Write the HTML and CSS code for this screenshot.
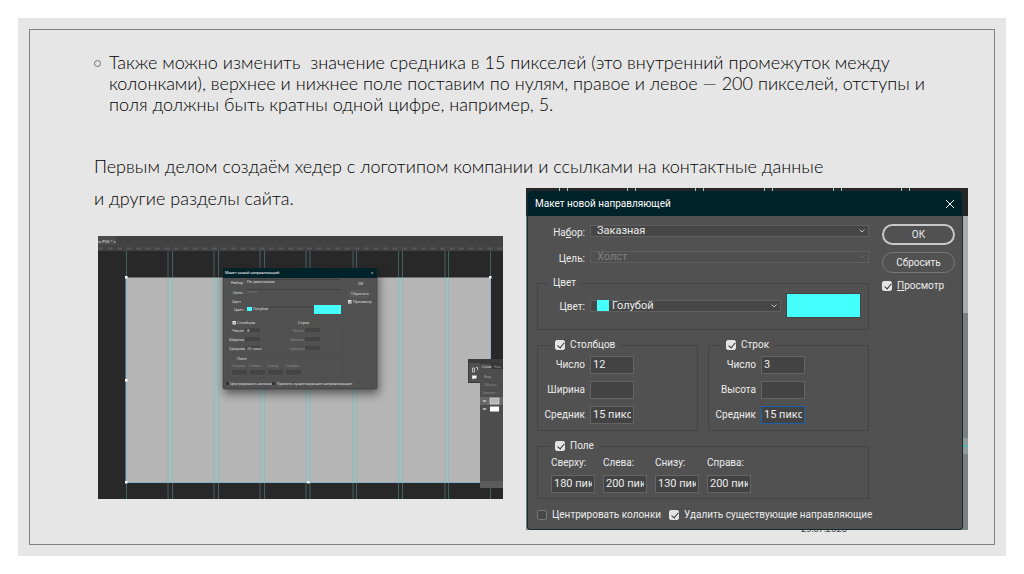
FILE: index.html
```html
<!DOCTYPE html>
<html lang="ru">
<head>
<meta charset="utf-8">
<title>Макет новой направляющей</title>
<link rel="stylesheet" href="styles.css">
</head>
<body>
<main class="slide">
  <div class="frame">
    <ul class="notes">
      <li>Также можно изменить&nbsp; значение средника в 15 пикселей (это внутренний промежуток между<br>колонками), верхнее и нижнее поле поставим по нулям, правое и левое — 200 пикселей, отступы и<br>поля должны быть кратны одной цифре, например, 5.</li>
    </ul>
    <p class="lead">Первым делом создаём хедер с логотипом компании и ссылками на контактные данные</p>
    <div class="columns">
      <div class="left">
        <p class="lead">и другие разделы сайта.</p>
        <svg class="thumb" viewBox="0 0 405 263" role="img" aria-label="Окно редактора с направляющими">
          <defs>
            <filter id="shade" x="-20%" y="-20%" width="140%" height="150%"><feGaussianBlur stdDeviation="5"/></filter>
          </defs>
          <rect width="405" height="263" fill="#282828"/>
          <rect width="405" height="15" fill="#424242"/>
          <rect width="18" height="9" fill="#4c4c4c"/>
          <path d="M0 12.500H405" stroke="#777" stroke-width="2" stroke-dasharray="5 4.500" opacity=".4"/>
          <rect x="28" y="41.500" width="364.500" height="205" fill="#b5b5b5"/>
          <g fill="#9cc4c4" opacity=".5">
            <rect x="70" y="42" width="5" height="204"/><rect x="116" y="42" width="5" height="204"/><rect x="162" y="42" width="5" height="204"/><rect x="208" y="42" width="5" height="204"/><rect x="255" y="42" width="4" height="204"/><rect x="300" y="42" width="5" height="204"/><rect x="347" y="42" width="4" height="204"/>
          </g>
          <path d="M28.500 15V263M70 15V263M74.500 15V263M116 15V263M120.500 15V263M162 15V263M166.500 15V263M208 15V263M212 15V263M255 15V263M258.500 15V263M300.500 15V263M304.500 15V263M347 15V263M350.500 15V263M392.500 15V263" stroke="#6fbab4" stroke-width="1" opacity=".4"/>
          <path d="M28 41.500V246.500H392.500V41.500" fill="none" stroke="#8ab3cf" stroke-width="1"/>
          <g fill="#fff"><rect x="27" y="40" width="2.500" height="2.500"/><rect x="391" y="40" width="2.500" height="2.500"/><rect x="27" y="143" width="2.500" height="2.500"/><rect x="27" y="245" width="2.500" height="2.500"/><rect x="209" y="245" width="2.500" height="2.500"/></g>
          <text x="0" y="7" font-size="4" fill="#ddd">ы.PSD * ×</text>
          <rect x="126" y="38" width="155" height="120" fill="#000" opacity=".5" filter="url(#shade)"/>
          <rect x="125" y="32" width="154" height="121" rx="1.500" fill="#515151" stroke="#333" stroke-width=".5"/>
          <path d="M125 42V33.500Q125 32 126.500 32H277.500Q279 32 279 33.500V42Z" fill="#002229"/>
          <path d="M148 43.500H243M148 53.500H243M162 71H218" stroke="#414141"/>
          <g fill="#434343"><rect x="147" y="92" width="15" height="4"/><rect x="147" y="101" width="15" height="4"/><rect x="147" y="110" width="15" height="4"/><rect x="207" y="92" width="15" height="4"/><rect x="207" y="101" width="15" height="4"/><rect x="207" y="110" width="15" height="4"/><rect x="134" y="134" width="15" height="4.500"/><rect x="152" y="134" width="15" height="4.500"/><rect x="170" y="134" width="15" height="4.500"/><rect x="188" y="134" width="15" height="4.500"/></g>
          <g font-size="4" fill="#ddd">
            <text x="127" y="38" fill="#fff">Макет новой направляющей</text><text x="273" y="38">×</text>
            <text x="133" y="48">Набор:</text><text x="149" y="47">По умолчанию</text>
            <text x="135" y="58">Цель:</text><text x="149" y="57" fill="#777">Холст</text>
            <text x="134" y="67">Цвет</text><text x="136" y="75">Цвет:</text><text x="155" y="74">Голубой</text>
            <text x="139" y="88">Столбцов</text><text x="200" y="88">Строк</text>
            <text x="134" y="96">Число</text><text x="149" y="96">8</text>
            <text x="131" y="105">Ширина</text><text x="131" y="114">Средник</text><text x="149" y="114">20 пикс.</text>
            <text x="139" y="124">Поле</text>
            <text x="132" y="149">Центрировать колонки</text><text x="179" y="149">Удалить существующие направляющие</text>
            <text x="260" y="49">ОК</text><text x="253" y="59">Сбросить</text><text x="255" y="67">Просмотр</text>
          </g>
          <g font-size="4" fill="#888">
            <text x="194" y="96">Число</text><text x="192" y="105">Высота</text><text x="191" y="114">Средник</text>
            <text x="134" y="131">Сверху:</text><text x="151" y="131">Слева:</text><text x="169" y="131">Снизу:</text><text x="187" y="131">Справа:</text>
          </g>
          <path d="M130 87H132M158 87H188V117H130V87M192 87H198M213 87H245V117H192V87M130 122H137M150 122H245V142H130V122" fill="none" stroke="#484848" stroke-width=".5"/>
          <rect x="149" y="71" width="5" height="4" fill="#45ffff"/>
          <rect x="216" y="69" width="27" height="9" fill="#45ffff"/>
          <g fill="#eee"><rect x="134.500" y="85" width="3.500" height="3.500" rx=".5"/><rect x="250" y="64" width="3.500" height="3.500" rx=".5"/></g>
          <path d="M135.200 86.700l.9.900 1.400-1.800M250.700 65.700l.9.900 1.400-1.800" fill="none" stroke="#333" stroke-width=".6"/>
          <g fill="#333"><rect x="128" y="146" width="3" height="3"/><rect x="174" y="146" width="3" height="3"/></g>
          <rect x="251" y="55" width="20" height="6" rx="3" fill="none" stroke="#6a6a6a" stroke-width=".5"/>
          <rect x="370" y="123" width="35" height="24" fill="#3a3a3a"/>
          <rect x="371" y="127" width="11" height="19" fill="#505050"/>
          <rect x="382" y="128" width="23" height="124" fill="#4d4d4d"/>
          <rect x="393" y="128" width="12" height="5" fill="#353535"/>
          <rect x="382" y="245" width="23" height="7" fill="#5b5b5b"/>
          <path d="M374.500 132h2v4h-2zM378 131.500h1.500v2.500" fill="none" stroke="#ddd" stroke-width=".8"/>
          <path d="M374 139.500h4.500v3h-2.500l-1.500 1z" fill="#fff"/>
          <g font-size="4" fill="#ddd"><text x="384" y="132">Слои</text><text x="396" y="132" fill="#999">Кан</text><text x="386" y="142" fill="#999">Вид</text><text x="386" y="150" fill="#888">Обычн.</text><text x="384" y="158" fill="#888">Закреп.:</text></g>
          <rect x="382" y="161" width="23" height="8" fill="#666"/>
          <rect x="392" y="162" width="9" height="6" fill="#b5b5b5" stroke="#ddd" stroke-width=".7"/><rect x="392" y="170.500" width="9" height="5" fill="#fff"/>
          <g fill="#bbb"><ellipse cx="386.500" cy="165" rx="2" ry="1"/><ellipse cx="386.500" cy="173" rx="2" ry="1"/></g>
        </svg>
      </div>
      <div class="shot">
        <svg class="backdrop" viewBox="0 0 442 342" preserveAspectRatio="none" aria-hidden="true">
          <rect width="442" height="342" fill="#7b7f7f"/>
          <rect width="442" height="28" fill="#262626"/>
          <rect x="436" y="28" width="6" height="97" fill="#a9adad"/>
          <rect x="436" y="250" width="6" height="16" fill="#8d9b9b"/><rect x="436" y="257" width="6" height="2" fill="#55b5b0"/>
          <path d="M33.500 0V4M41.500 0V4M101.500 0V4M109.500 0V4M169.500 0V4M177.500 0V4M238.500 0V4M246.500 0V4M307.500 0V4M315.500 0V4M375.500 0V4M383.500 0V4" stroke="#8ccfc5"/>
        </svg>
        <form class="dialog">
          <header class="titlebar">
            <h1>Макет новой направляющей</h1>
            <button type="button" class="close" aria-label="Закрыть"><svg viewBox="0 0 10 10"><path d="M1 1l8 8M9 1l-8 8"/></svg></button>
          </header>
          <div class="body">
            <div class="main">
              <div class="pair"><label for="preset">На<u>б</u>ор:</label><span class="drop"><select id="preset"><option>Заказная</option></select><svg viewBox="0 0 6 4"><path d="M.5 .5L3 3L5.500 .5"/></svg></span></div>
              <div class="pair"><label for="target">Цель:</label><span class="drop off"><select id="target" disabled><option>Холст</option></select><svg viewBox="0 0 6 4"><path d="M.5 .5L3 3L5.500 .5"/></svg></span></div>
              <fieldset class="color">
                <legend>Цвет</legend>
                <div class="pair"><label for="tint">Цвет:</label><span class="drop"><i class="chip"></i><select id="tint"><option>Голубой</option></select><svg viewBox="0 0 6 4"><path d="M.5 .5L3 3L5.500 .5"/></svg></span><button type="button" class="swatch" aria-label="Выбрать цвет"></button></div>
              </fieldset>
              <div class="sets">
                <fieldset>
                  <legend><label class="tick"><input type="checkbox" checked>Столбцов</label></legend>
                  <div class="pair"><label for="cn">Число</label><input id="cn" class="field" type="text" value="12"></div>
                  <div class="pair"><label for="cw">Ширина</label><input id="cw" class="field" type="text"></div>
                  <div class="pair"><label for="cg">Средник</label><input id="cg" class="field" type="text" value="15 пикс."></div>
                </fieldset>
                <fieldset>
                  <legend><label class="tick"><input type="checkbox" checked>Строк</label></legend>
                  <div class="pair"><label for="rn">Число</label><input id="rn" class="field" type="text" value="3"></div>
                  <div class="pair"><label for="rh">Высота</label><input id="rh" class="field" type="text"></div>
                  <div class="pair"><label for="rg">Средник</label><input id="rg" class="field active" type="text" value="15 пикс."></div>
                </fieldset>
              </div>
              <fieldset class="margins">
                <legend><label class="tick"><input type="checkbox" checked>Поле</label></legend>
                <div class="sides">
                  <label>Сверху:<input class="field" type="text" value="180 пикс."></label>
                  <label>Слева:<input class="field" type="text" value="200 пикс."></label>
                  <label>Снизу:<input class="field" type="text" value="130 пикс."></label>
                  <label>Справа:<input class="field" type="text" value="200 пикс."></label>
                </div>
              </fieldset>
              <div class="options">
                <label class="tick"><input type="checkbox">Центрировать колонки</label>
                <label class="tick"><input type="checkbox" checked>Удалить существующие направляющие</label>
              </div>
            </div>
            <div class="side">
              <button type="button" class="pill strong">ОК</button>
              <button type="button" class="pill">Сбросить</button>
              <label class="tick"><input type="checkbox" checked><span><u>П</u>росмотр</span></label>
            </div>
          </div>
        </form>
      </div>
    </div>
    <time class="date" datetime="2023-07-25">25.07.2023</time>
  </div>
</main>
</body>
</html>
```
FILE: styles.css
```css
* { box-sizing: border-box; }
body { margin: 0; padding: 18px; background: #fff; color: #000; font: 300 18px/22px Lato, "Open Sans", sans-serif; }
.slide { padding: 11px; background: #e6e6e6; }
.frame { position: relative; border: 1px solid #7f8281; padding: 22px 26px 14px 64px; }
.notes { margin: 0 0 40px; padding: 0; list-style: none; line-height: 21px; }
.notes li { position: relative; padding-left: 15px; white-space: nowrap; }
.notes li::before { content: ""; position: absolute; left: 0; top: 8px; width: 5px; height: 5px; border: 1px solid #707070; border-radius: 50%; }
.lead { margin: 0; white-space: nowrap; }
.columns { position: relative; z-index: 1; display: grid; grid-template-columns: 432fr 442fr; margin-top: 10px; }
.left { min-width: 0; }
.thumb { display: block; width: calc(100% - 27px); margin: 27px 0 0 4px; font-family: Roboto, sans-serif; font-weight: 400; }
.shot { position: relative; min-width: 0; margin-top: 1px; padding: 3px 5px 0 1px; overflow: hidden; font: 10px/14px Roboto, sans-serif; color: #ececec; }
.backdrop { position: absolute; inset: 0; width: 100%; height: 100%; }
.dialog { position: relative; background: #515151; border: 1px solid #102c31; border-top: 0; border-radius: 4px; overflow: hidden; }
.titlebar { display: flex; align-items: center; justify-content: space-between; height: 25px; padding: 0 7px; background: #002229; }
.titlebar h1 { margin: 0; font-size: inherit; font-weight: 400; color: #fff; }
button, input, select { font: inherit; color: inherit; }
.close { width: 10px; height: 10px; padding: 0; border: 0; background: none; }
.close svg { display: block; fill: none; stroke: #fff; }
.body { display: flex; gap: 13px; padding: 2px 7px 7px 9px; }
.main { flex: 1; min-width: 0; }
.pair { display: grid; grid-template-columns: 48px 1fr; column-gap: 5px; align-items: center; }
.pair label { text-align: right; white-space: nowrap; }
.main > .pair { height: 26px; }
.main > .pair label, .color label { padding-top: 3px; }
.drop { position: relative; display: flex; align-items: center; height: 12px; min-width: 0; padding-left: 6px; background: #464646; border: 1px solid #5f5f5f; }
.drop select { flex: 1; min-width: 0; height: 14px; padding: 0; border: 0; background: none; appearance: none; font-size: 11px; line-height: 14px; }
.drop svg { width: 6px; height: 4px; margin-right: 3px; fill: none; stroke: #bbb; }
.off { background: #4f4f4f; color: #808080; }
.off select { opacity: 1; }
.off svg { stroke: #666; }
.chip { width: 12px; height: 11px; margin-right: 3px; background: #45ffff; }
fieldset { min-width: 0; margin: 0; padding: 0; border: 1px solid #454545; }
legend { margin-left: 10px; padding: 0 5px; line-height: 14px; }
.color { margin-top: 6px; padding: 3px 7px 11px 0; }
.color .pair { grid-template-columns: 47px 1fr 75px; }
.swatch { height: 25px; padding: 0; border: 1px solid #444; background: #45ffff; }
.sets { display: grid; grid-template-columns: 1fr 1fr; gap: 10px; margin-top: 8px; }
.sets fieldset { padding-bottom: 3px; }
.sets legend { margin-left: 12px; }
.sets .pair { grid-template-columns: 47px 44px; height: 25px; }
.tick { display: flex; align-items: center; gap: 5px; white-space: nowrap; }
.tick input { appearance: none; flex: none; width: 10px; height: 10px; margin: 0; border: 1px solid #777; border-radius: 2px; background: #484848; }
.tick input:checked { border-color: #e4e4e4; background: #e4e4e4; }
.tick input:checked::before { content: ""; display: block; width: 3px; height: 6px; margin: 0 0 0 3px; border: solid #333; border-width: 0 1px 1px 0; transform: rotate(40deg); }
.field { display: block; width: 44px; height: 18px; padding: 0 2px; border: 1px solid #646464; background: #434343; font-size: 11px; }
.active { border-color: #1f5fb0; }
.margins { margin-top: 8px; padding: 1px 0 5px 13px; }
.margins legend { margin-left: -1px; }
.sides { display: flex; gap: 8px; }
.sides label { line-height: 18px; }
.sides .field { margin-top: 3px; }
.options { display: flex; gap: 8px; margin-top: 9px; }
.side { display: flex; flex-direction: column; width: 73px; padding-top: 4px; }
.pill { height: 21px; margin: 2px 0 5px; padding: 0; border: 1px solid #777; border-radius: 11px; background: none; }
.strong { border: 2px solid #c8c8c8; }
.side .tick { margin-top: 1px; }
.date { position: absolute; right: 147px; bottom: 9px; font-size: 9px; line-height: 12px; font-weight: 400; color: #444; }
```
